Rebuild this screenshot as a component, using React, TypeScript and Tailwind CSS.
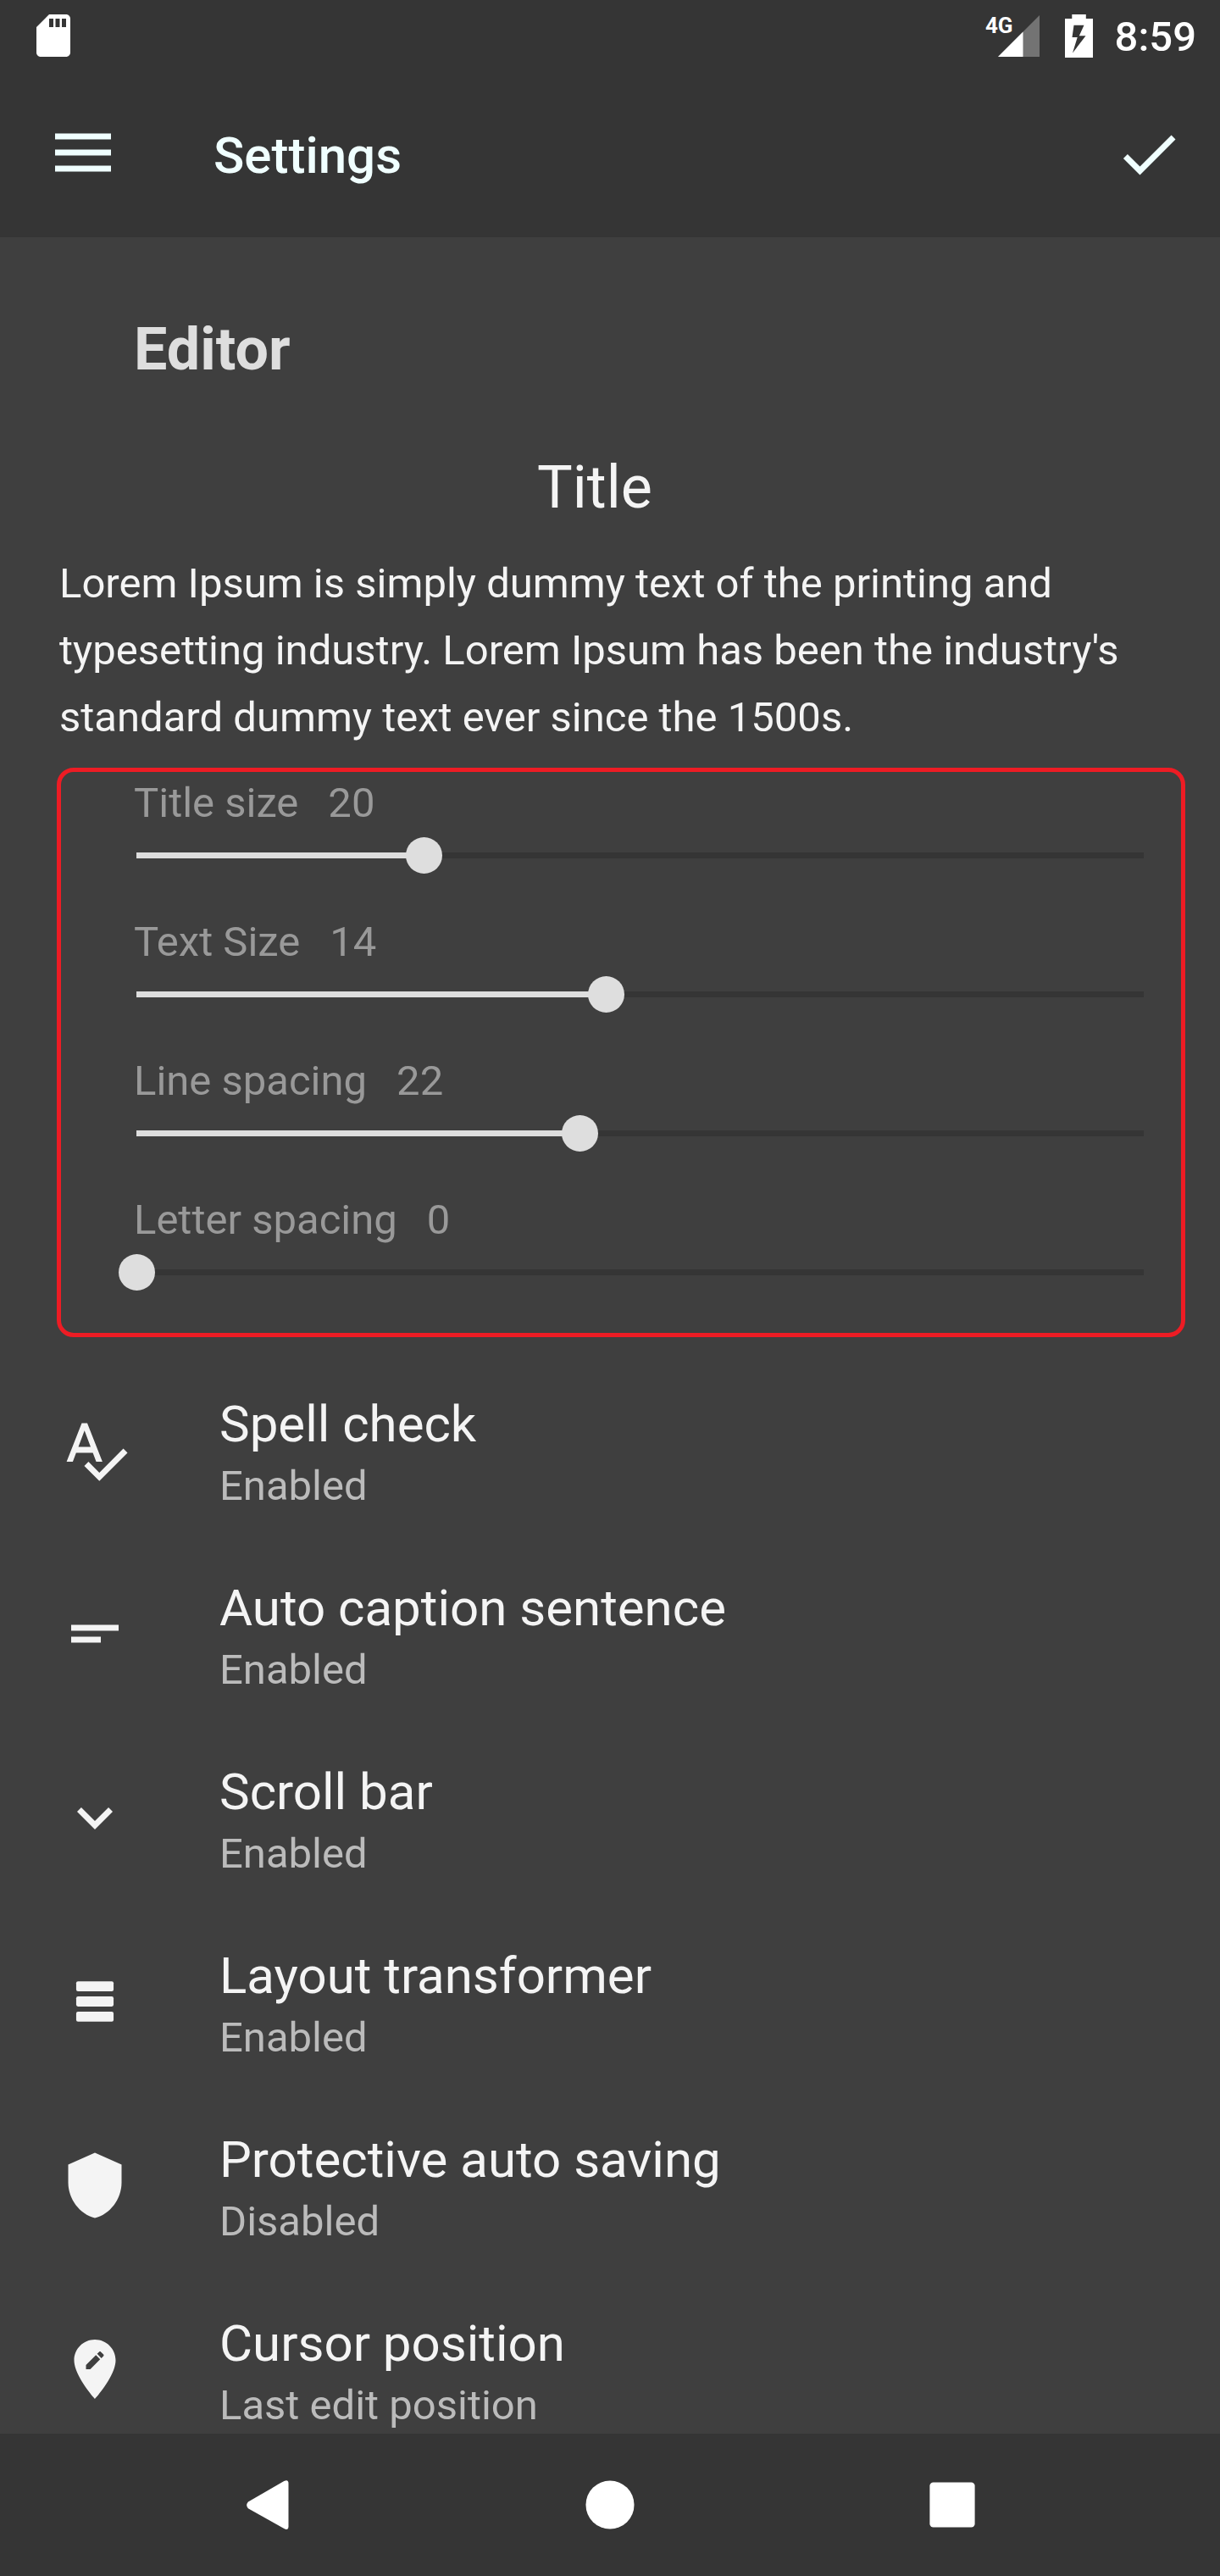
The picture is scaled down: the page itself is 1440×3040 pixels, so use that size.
import { useId, useState } from "react";
import type { ReactNode } from "react";

function Icon({ children }: { children: ReactNode }) {
  return (
    <svg viewBox="0 0 24 24" className="size-[84px] shrink-0" fill="currentColor" aria-hidden="true">
      {children}
    </svg>
  );
}

function StatusBar() {
  return (
    <div className="flex h-[84px] items-center justify-between pr-7 pl-[33px] text-white">
      <svg viewBox="0 0 24 24" className="size-[60px]" fill="currentColor" aria-label="SD card">
        <path d="M18 2h-8L4 8v12c0 1.1.9 2 2 2h12c1.1 0 2-.9 2-2V4c0-1.100-.9-2-2-2zm-6 6h-2V4h2v4zm3 0h-2V4h2v4zm3 0h-2V4h2v4z" />
      </svg>
      <div className="flex items-center">
        <div className="relative mr-[30px]">
          <svg viewBox="0 0 49 49" className="size-[49px]" aria-label="Signal strength">
            <path d="M49 0V49H0z" fill="#737373" />
            <path d="M29.500 19.500V49H0z" fill="#fff" />
          </svg>
          <span className="absolute top-0 right-[31px] text-[26px] leading-6 font-bold">4G</span>
        </div>
        <svg viewBox="0 0 33 51" className="mr-[26px] h-[51px] w-[33px]" aria-label="Battery charging">
          <path
            d="M8.300 0h16.500v5H33v46H0V5h8.300zM10.500 12.700 8.500 27h6.200L9 45.500 24.500 25.200h-7.700L22.500 12.700z"
            fill="#fff"
            fillRule="evenodd"
          />
        </svg>
        <span className="pt-1 text-[49px] leading-[58px] font-medium">8:59</span>
      </div>
    </div>
  );
}

function AppBar() {
  return (
    <div className="flex h-[196px] items-center pr-[42px] pl-[56px] text-[#f0ffff]">
      <button type="button" aria-label="Open menu" className="flex size-[84px] items-center justify-center">
        <svg viewBox="0 0 66 50" className="h-[50px] w-[66px]" fill="currentColor" aria-hidden="true">
          <path d="M0 .500h66v7H0zM0 19.500h66v7H0zM0 38.500h66v7H0z" />
        </svg>
      </button>
      <h1 className="ml-28 flex-1 pt-1 text-[60px] leading-[70px] font-medium">Settings</h1>
      <button type="button" aria-label="Save">
        <Icon>
          <path d="M9 16.170 4.830 12l-1.420 1.410L9 19 21 7l-1.410-1.410z" />
        </Icon>
      </button>
    </div>
  );
}

type SliderProps = { label: string; min: number; max: number; initial: number };

function SliderRow({ label, min, max, initial }: SliderProps) {
  const id = useId();
  const [value, setValue] = useState(initial);
  const percent = ((value - min) / (max - min)) * 100;
  return (
    <div>
      <div className="flex gap-[35px] pl-[18px] text-[49px] leading-[58px] text-[#999999]">
        <label htmlFor={id}>{label}</label>
        <output htmlFor={id}>{value}</output>
      </div>
      <div className="mt-[11px] grid items-center">
        <div className="col-start-1 row-start-1 mx-[21px] h-[7px] bg-[#353535]">
          <div className="h-full bg-[#dedede]" style={{ width: `${percent}%` }} />
        </div>
        <input
          id={id}
          type="range"
          min={min}
          max={max}
          value={value}
          onChange={(e) => setValue(Number(e.target.value))}
          className="col-start-1 row-start-1 h-[43px] w-full cursor-pointer appearance-none bg-transparent [&::-webkit-slider-thumb]:size-[43px] [&::-webkit-slider-thumb]:appearance-none [&::-webkit-slider-thumb]:rounded-full [&::-webkit-slider-thumb]:bg-[#dedede]"
        />
      </div>
    </div>
  );
}

const sliders: SliderProps[] = [
  { label: "Title size", min: 10, max: 45, initial: 20 },
  { label: "Text Size", min: 7, max: 22, initial: 14 },
  { label: "Line spacing", min: 11, max: 36, initial: 22 },
  { label: "Letter spacing", min: 0, max: 10, initial: 0 },
];

const options: { title: string; detail: string; icon: ReactNode }[] = [
  {
    title: "Spell check",
    detail: "Enabled",
    icon: (
      <path d="M12.450 16h2.090L9.430 3H7.570L2.460 16h2.090l1.120-3h5.640l1.140 3zm-6.020-5L8.500 5.480 10.570 11H6.430zm15.160.590-8.090 8.090L9.830 16l-1.410 1.410 5.090 5.090L23 13l-1.410-1.410z" />
    ),
  },
  {
    title: "Auto caption sentence",
    detail: "Enabled",
    icon: <path d="M4 9h16v2H4zM4 13h10v2H4z" />,
  },
  {
    title: "Scroll bar",
    detail: "Enabled",
    icon: <path d="M16.590 8.590 12 13.170 7.410 8.590 6 10l6 6 6-6z" />,
  },
  {
    title: "Layout transformer",
    detail: "Enabled",
    icon: (
      <>
        <rect x="5.7" y="5.2" width="12.6" height="3.4" rx="0.6" />
        <rect x="5.7" y="10.3" width="12.6" height="3.4" rx="0.6" />
        <rect x="5.7" y="15.4" width="12.6" height="3.4" rx="0.6" />
      </>
    ),
  },
  {
    title: "Protective auto saving",
    detail: "Disabled",
    icon: <path d="M12 1 3 5v6c0 5.550 3.840 10.740 9 12 5.160-1.260 9-6.450 9-12V5l-9-4z" />,
  },
  {
    title: "Cursor position",
    detail: "Last edit position",
    icon: (
      <path d="M12 2C8.140 2 5 5.140 5 9c0 5.250 7 13 7 13s7-7.750 7-13c0-3.860-3.140-7-7-7zm-1.560 10H9v-1.440l3.350-3.340 1.430 1.430L10.440 12zm4.450-4.450-.7.7-1.440-1.440.7-.7c.150-.150.390-.150.540 0l.9.9c.150.150.150.390 0 .540z" />
    ),
  },
];

export default function App() {
  return (
    <div className="flex h-screen flex-col bg-[#3f3f3f] font-['Roboto',sans-serif] text-[#f4f4f4]">
      <header className="shrink-0 bg-[#353535]">
        <StatusBar />
        <AppBar />
      </header>

      <main className="min-h-0 flex-1 overflow-y-auto pt-[91px] [scrollbar-width:none]">
        <h2 className="pl-[158px] text-[70px] leading-[82px] font-bold text-[#dedede]">Editor</h2>

        <section className="mt-[81px] pr-9">
          <h3 className="text-center text-[70px] leading-[82px]">Title</h3>
          <p className="mt-[33px] px-[70px] text-[49px] leading-[79px]">
            Lorem Ipsum is simply dummy text of the printing and typesetting industry. Lorem Ipsum has been the
            industry's standard dummy text ever since the 1500s.
          </p>
        </section>

        <section className="mt-5 mr-[41px] ml-[67px] flex flex-col gap-[52px] rounded-[20px] border-5 border-[#ed1c24] pt-2 pr-[23px] pb-[50px] pl-[68px]">
          {sliders.map((slider) => (
            <SliderRow key={slider.label} {...slider} />
          ))}
        </section>

        <ul className="mt-7">
          {options.map(({ title, detail, icon }) => (
            <li key={title}>
              <button type="button" className="flex w-full items-center py-10 pr-10 pl-[70px] text-left">
                <span className="mb-2">
                  <Icon>{icon}</Icon>
                </span>
                <span className="ml-[105px] flex flex-col gap-[9px]">
                  <span className="text-[60px] leading-[70px]">{title}</span>
                  <span className="text-[49px] leading-[58px] text-[#bbbbbb]">{detail}</span>
                </span>
              </button>
            </li>
          ))}
        </ul>
      </main>

      <nav className="flex h-[168px] shrink-0 items-center justify-between bg-[#353535] px-[19%] text-white">
        <button type="button" aria-label="Back">
          <Icon>
            <path d="M5.400 11 17.500 4Q19 3.300 19 4.800V19.200Q19 20.800 17.500 20L5.400 13.200Q4.400 12.100 5.400 11z" />
          </Icon>
        </button>
        <button type="button" aria-label="Home">
          <Icon>
            <circle cx="12" cy="12" r="8.150" />
          </Icon>
        </button>
        <button type="button" aria-label="Recent apps">
          <Icon>
            <rect x="4.400" y="4.400" width="15.200" height="15.200" rx="1.200" />
          </Icon>
        </button>
      </nav>
    </div>
  );
}
